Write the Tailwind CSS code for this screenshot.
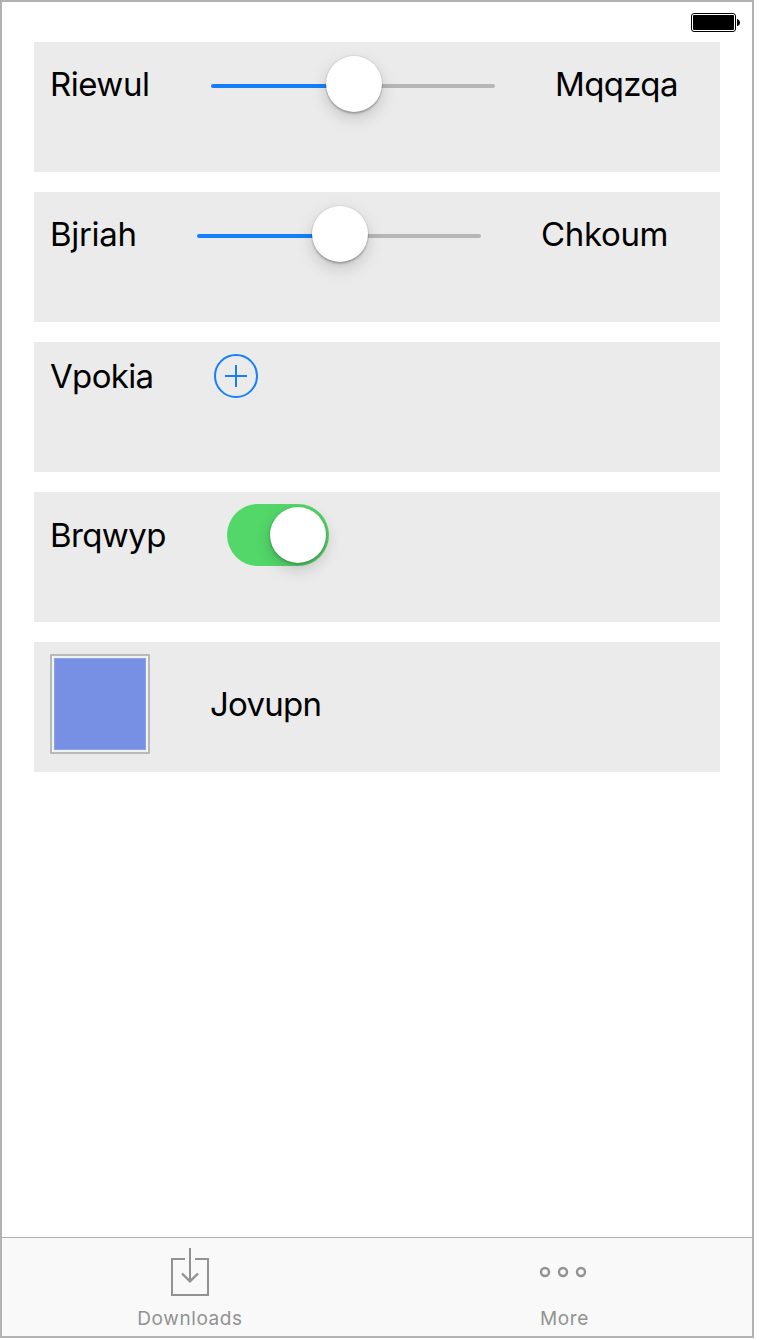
<!DOCTYPE html>
<html lang="en">
<head>
<meta charset="utf-8">
<title>Controls</title>
<script src="https://cdn.jsdelivr.net/npm/@tailwindcss/browser@4"></script>
</head>
<body class="bg-white font-['Inter',sans-serif] text-black">
<div class="w-[754px] h-[1338px] border-2 border-[#b2b2b2] bg-white flex flex-col">
  <header class="h-10 shrink-0 flex justify-end pt-[11px] pr-[12px]">
    <svg width="49" height="19" viewBox="0 0 49 19">
      <rect x=".5" y=".5" width="44" height="18" rx="2.5" fill="#fff" stroke="#000"/>
      <rect x="2" y="2" width="41" height="15" rx="1" fill="#000"/>
      <path d="M46 6h.5Q49 7 49 9.500T46.500 13H46Z" fill="#000"/>
    </svg>
  </header>
  <main class="flex-1 flex flex-col gap-5 px-8 text-[33px] leading-10">
    <section class="w-[686px] h-[130px] bg-[#ebebeb] flex items-start pt-3 pl-4">
      <div class="mt-[10px] w-[161px] tracking-[-0.5px]">Riewul</div>
      <div class="relative w-[284px] h-[62px] flex items-center pt-[2px]">
        <div class="w-1/2 h-1 rounded-l-full bg-[#157efb]"></div>
        <div class="w-1/2 h-1 rounded-r-full bg-[#b6b6b6]"></div>
        <div class="absolute left-[115px] top-[2px] size-14 rounded-full bg-white shadow-[0_0_0_1px_rgba(0,0,0,0.05),0_2px_2px_rgba(0,0,0,0.22),0_6px_16px_rgba(0,0,0,0.17)]"></div>
      </div>
      <div class="mt-[10px] ml-[60px] tracking-[-0.65px]">Mqqzqa</div>
    </section>
    <section class="w-[686px] h-[130px] bg-[#ebebeb] flex items-start pt-3 pl-4">
      <div class="mt-[10px] w-[147px] tracking-[-0.3px]">Bjriah</div>
      <div class="relative w-[284px] h-[62px] flex items-center pt-[2px]">
        <div class="w-1/2 h-1 rounded-l-full bg-[#157efb]"></div>
        <div class="w-1/2 h-1 rounded-r-full bg-[#b6b6b6]"></div>
        <div class="absolute left-[115px] top-[2px] size-14 rounded-full bg-white shadow-[0_0_0_1px_rgba(0,0,0,0.05),0_2px_2px_rgba(0,0,0,0.22),0_6px_16px_rgba(0,0,0,0.17)]"></div>
      </div>
      <div class="mt-[10px] ml-[60px] tracking-[-0.35px]">Chkoum</div>
    </section>
    <section class="w-[686px] h-[130px] bg-[#ebebeb] flex items-start pt-3 pl-4">
      <div class="mt-[2px] w-[164px] tracking-[-0.65px]">Vpokia</div>
      <svg width="44" height="44" viewBox="0 0 44 44" fill="none" stroke="#157efb" stroke-width="2">
        <circle cx="22" cy="22" r="21"/>
        <path d="M11 22H33M22 11V33"/>
      </svg>
    </section>
    <section class="w-[686px] h-[130px] bg-[#ebebeb] flex items-start pt-3 pl-4">
      <div class="mt-[11px] w-[177px] tracking-[-0.6px]">Brqwyp</div>
      <div class="w-[102px] h-[62px] rounded-full bg-[#53d769] flex justify-end p-[3px]">
        <div class="size-14 rounded-full bg-white shadow-[0_1px_3px_rgba(0,0,0,0.3),0_6px_16px_rgba(0,0,0,0.18)]"></div>
      </div>
    </section>
    <section class="w-[686px] h-[130px] bg-[#ebebeb] flex items-start pt-3 pl-4">
      <div class="size-[100px] border-2 border-[#b9b9b9] bg-[#f1f3fa] p-[2px]">
        <div class="size-full bg-[#7790e3] border border-[#8fa4e8]"></div>
      </div>
      <div class="mt-[30px] ml-[60px] tracking-[-0.75px]">Jovupn</div>
    </section>
  </main>
  <nav class="h-[99px] shrink-0 border-t border-[#b0b0b0] bg-[#f9f9f9] flex text-[19px] leading-6 text-[#929292] tracking-[0.6px]">
    <div class="w-[376px] flex flex-col items-center pt-[10px]">
      <svg width="38" height="48" viewBox="0 0 38 48" fill="none" stroke="#929292" stroke-width="2">
        <path d="M14 11H1V47H37V11H24M19 0V33"/>
        <path d="M11 25.500L19 33.300L27 25.500" stroke-width="2.400"/>
      </svg>
      <span class="mt-[11px]">Downloads</span>
    </div>
    <div class="w-[370px] flex flex-col items-center pt-[10px]">
      <svg width="48" height="48" viewBox="0 0 48 48" fill="none" stroke="#929292" stroke-width="2.400">
        <circle cx="6" cy="24" r="4"/><circle cx="24" cy="24" r="4"/><circle cx="42" cy="24" r="4"/>
      </svg>
      <span class="mt-[11px] ml-[3px]">More</span>
    </div>
  </nav>
</div>
</body>
</html>
